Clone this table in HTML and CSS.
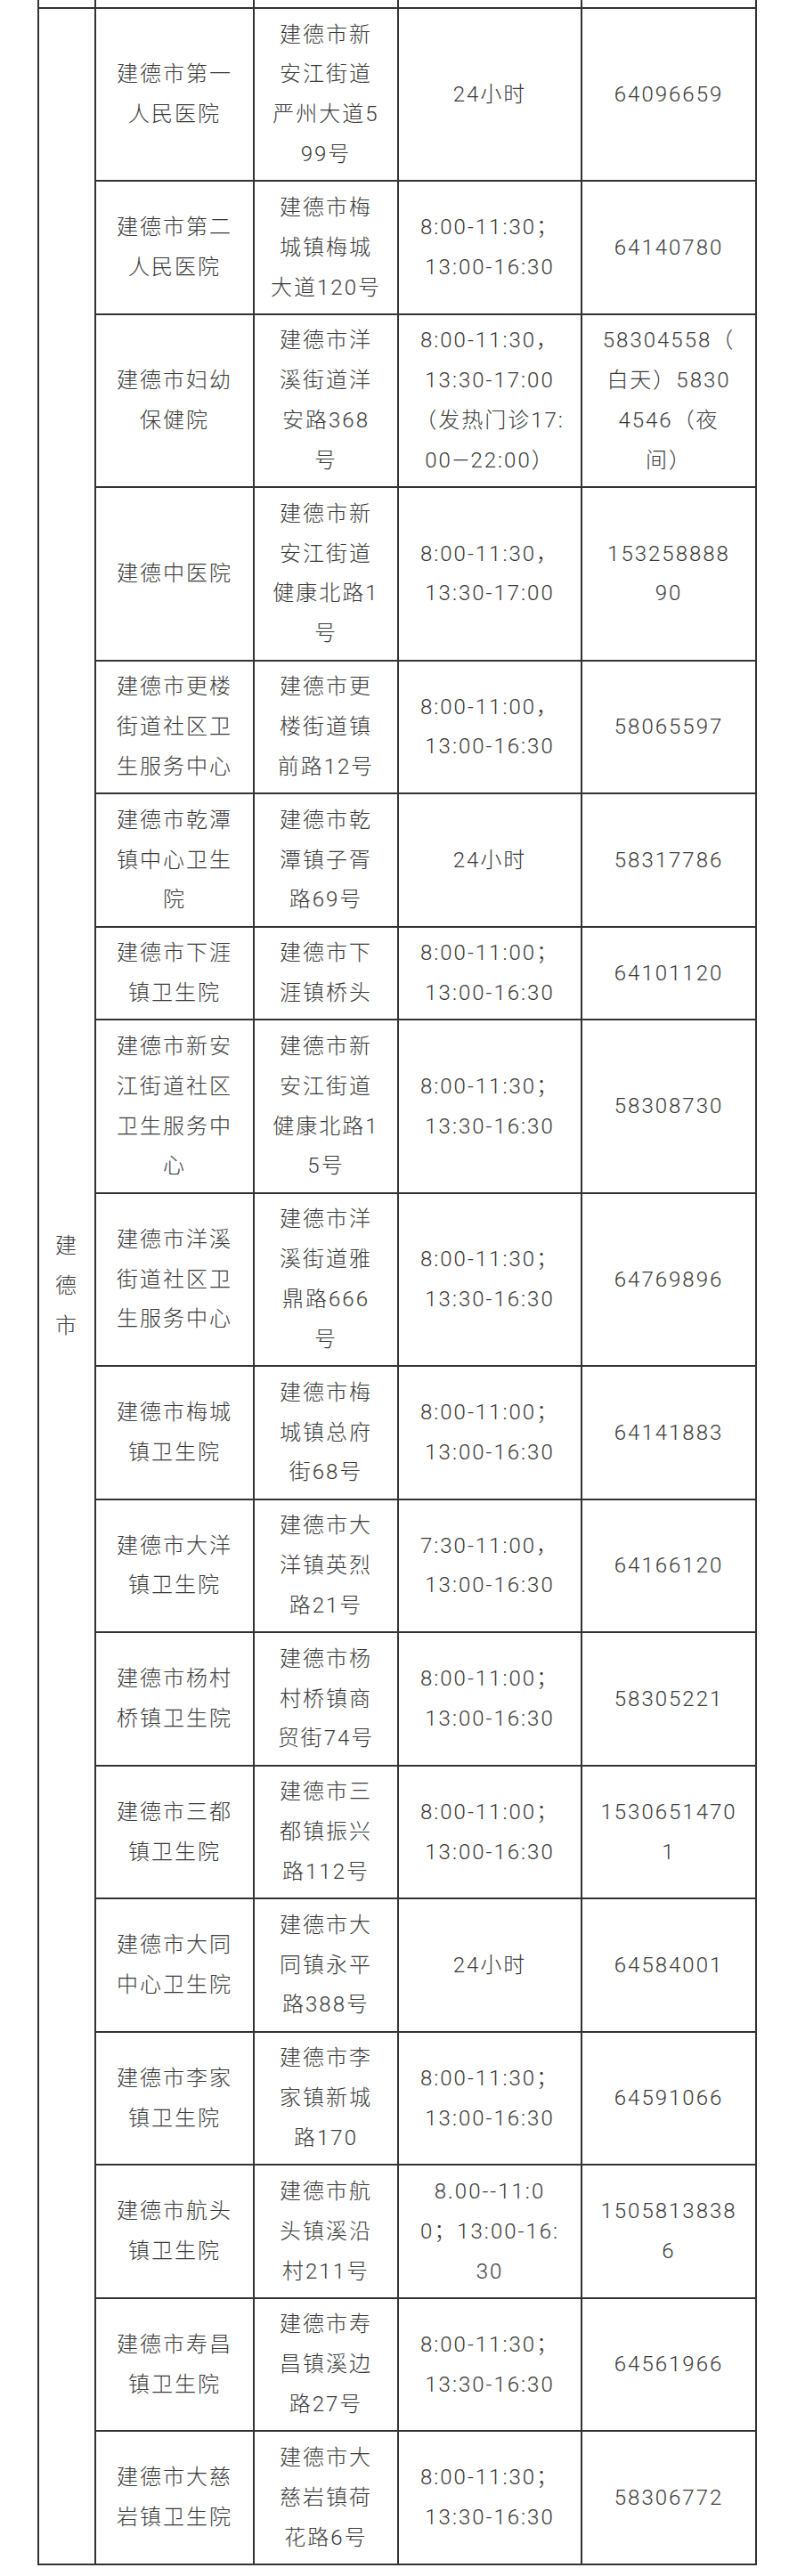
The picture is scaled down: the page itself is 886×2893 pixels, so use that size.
FILE: index.html
```html
<!DOCTYPE html>
<html lang="zh-CN">
<head>
<meta charset="utf-8">
<title>建德市医疗机构</title>
<link rel="stylesheet" href="styles.css">
</head>
<body>
<div class="sheet">
  <div class="cell stub"></div>
  <div class="cell stub"></div>
  <div class="cell stub"></div>
  <div class="cell stub"></div>
  <div class="cell stub"></div>

  <div class="cell region">建<br>德<br>市</div>

  <div class="cell">建德市第一<br>人民医院</div>
  <div class="cell">建德市新<br>安江街道<br>严州大道5<br>99号</div>
  <div class="cell">24小时</div>
  <div class="cell">64096659</div>

  <div class="cell">建德市第二<br>人民医院</div>
  <div class="cell">建德市梅<br>城镇梅城<br>大道120号</div>
  <div class="cell">8:00-11:30；<br>13:00-16:30</div>
  <div class="cell">64140780</div>

  <div class="cell">建德市妇幼<br>保健院</div>
  <div class="cell">建德市洋<br>溪街道洋<br>安路368<br>号</div>
  <div class="cell">8:00-11:30，<br>13:30-17:00<br>（发热门诊17:<br>00—22:00）</div>
  <div class="cell">58304558（<br>白天）5830<br>4546（夜<br>间）</div>

  <div class="cell">建德中医院</div>
  <div class="cell">建德市新<br>安江街道<br>健康北路1<br>号</div>
  <div class="cell">8:00-11:30，<br>13:30-17:00</div>
  <div class="cell">153258888<br>90</div>

  <div class="cell">建德市更楼<br>街道社区卫<br>生服务中心</div>
  <div class="cell">建德市更<br>楼街道镇<br>前路12号</div>
  <div class="cell">8:00-11:00，<br>13:00-16:30</div>
  <div class="cell">58065597</div>

  <div class="cell">建德市乾潭<br>镇中心卫生<br>院</div>
  <div class="cell">建德市乾<br>潭镇子胥<br>路69号</div>
  <div class="cell">24小时</div>
  <div class="cell">58317786</div>

  <div class="cell">建德市下涯<br>镇卫生院</div>
  <div class="cell">建德市下<br>涯镇桥头</div>
  <div class="cell">8:00-11:00；<br>13:00-16:30</div>
  <div class="cell">64101120</div>

  <div class="cell">建德市新安<br>江街道社区<br>卫生服务中<br>心</div>
  <div class="cell">建德市新<br>安江街道<br>健康北路1<br>5号</div>
  <div class="cell">8:00-11:30；<br>13:30-16:30</div>
  <div class="cell">58308730</div>

  <div class="cell">建德市洋溪<br>街道社区卫<br>生服务中心</div>
  <div class="cell">建德市洋<br>溪街道雅<br>鼎路666<br>号</div>
  <div class="cell">8:00-11:30；<br>13:30-16:30</div>
  <div class="cell">64769896</div>

  <div class="cell">建德市梅城<br>镇卫生院</div>
  <div class="cell">建德市梅<br>城镇总府<br>街68号</div>
  <div class="cell">8:00-11:00；<br>13:00-16:30</div>
  <div class="cell">64141883</div>

  <div class="cell">建德市大洋<br>镇卫生院</div>
  <div class="cell">建德市大<br>洋镇英烈<br>路21号</div>
  <div class="cell">7:30-11:00，<br>13:00-16:30</div>
  <div class="cell">64166120</div>

  <div class="cell">建德市杨村<br>桥镇卫生院</div>
  <div class="cell">建德市杨<br>村桥镇商<br>贸街74号</div>
  <div class="cell">8:00-11:00；<br>13:00-16:30</div>
  <div class="cell">58305221</div>

  <div class="cell">建德市三都<br>镇卫生院</div>
  <div class="cell">建德市三<br>都镇振兴<br>路112号</div>
  <div class="cell">8:00-11:00；<br>13:00-16:30</div>
  <div class="cell">1530651470<br>1</div>

  <div class="cell">建德市大同<br>中心卫生院</div>
  <div class="cell">建德市大<br>同镇永平<br>路388号</div>
  <div class="cell">24小时</div>
  <div class="cell">64584001</div>

  <div class="cell">建德市李家<br>镇卫生院</div>
  <div class="cell">建德市李<br>家镇新城<br>路170</div>
  <div class="cell">8:00-11:30；<br>13:00-16:30</div>
  <div class="cell">64591066</div>

  <div class="cell">建德市航头<br>镇卫生院</div>
  <div class="cell">建德市航<br>头镇溪沿<br>村211号</div>
  <div class="cell">8.00--11:0<br>0；13:00-16:<br>30</div>
  <div class="cell">1505813838<br>6</div>

  <div class="cell">建德市寿昌<br>镇卫生院</div>
  <div class="cell">建德市寿<br>昌镇溪边<br>路27号</div>
  <div class="cell">8:00-11:30；<br>13:30-16:30</div>
  <div class="cell">64561966</div>

  <div class="cell">建德市大慈<br>岩镇卫生院</div>
  <div class="cell">建德市大<br>慈岩镇荷<br>花路6号</div>
  <div class="cell">8:00-11:30；<br>13:30-16:30</div>
  <div class="cell">58306772</div>
</div>
</body>
</html>
```
FILE: styles.css
```css
html, body {
  margin: 0;
  padding: 0;
  background: #ffffff;
}

body {
  font-family: Roboto, "Noto Sans CJK SC", sans-serif;
  font-weight: 300;
  font-size: 24px;
  letter-spacing: 2px;
  color: #3a3a3a;
}

.sheet {
  display: grid;
  grid-template-columns: 64px 178px 162px 206px 196px;
  margin-left: 42px;
  width: max-content;
  border-left: 2px solid #333333;
}

.cell {
  box-sizing: border-box;
  border-right: 2px solid #333333;
  border-bottom: 2px solid #333333;
  padding: 6.5px 0;
  line-height: 44.85px;
  white-space: nowrap;
  text-align: center;
  display: flex;
  align-items: center;
  justify-content: center;
}

.stub {
  height: 10px;
  padding: 0;
}

.region {
  grid-column: 1;
  grid-row: 2 / span 18;
}
```
